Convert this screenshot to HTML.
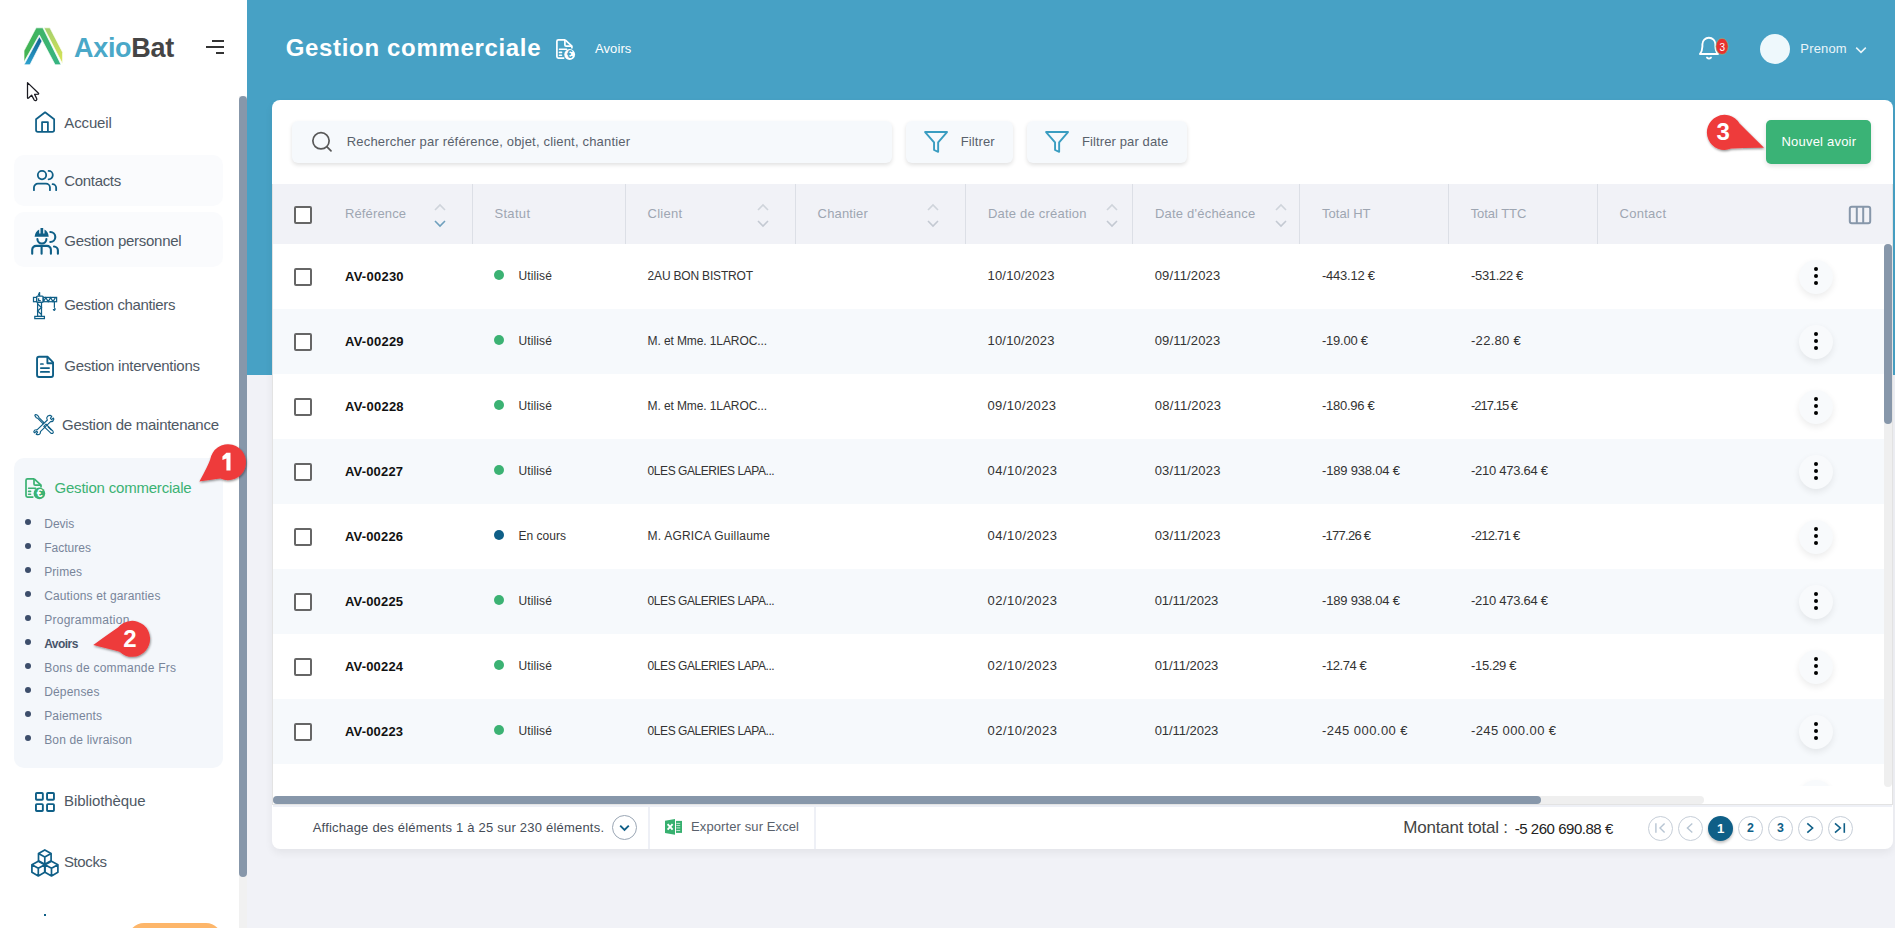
<!DOCTYPE html>
<html><head><meta charset="utf-8">
<style>
*{box-sizing:border-box;margin:0;padding:0}
html,body{width:1895px;height:928px;overflow:hidden;background:#f1f2f7;font-family:"Liberation Sans",sans-serif;position:relative}
.a{position:absolute;white-space:nowrap}
#side{position:absolute;left:0;top:0;width:247px;height:928px;background:#fff}
#hdr{position:absolute;left:247px;top:0;width:1648px;height:375px;background:#47a1c5}
#card{position:absolute;left:272px;top:100px;width:1621px;height:749px;background:#fff;border-radius:8px;box-shadow:0 4px 8px rgba(0,0,0,.06)}
.dot{position:absolute;width:6px;height:6px;border-radius:3px;background:#3d4e6b}
.cb{position:absolute;width:18px;height:18px;border:2px solid #666;border-radius:2px;background:#fff}
.kb{position:absolute;width:34px;height:34px;border-radius:17px;background:#f8fafc;box-shadow:0 3px 7px rgba(0,0,0,.08)}
.kb i{position:absolute;left:15px;width:4.2px;height:4.2px;border-radius:50%;background:#000}
.vs{position:absolute;top:184px;width:1px;height:60px;background:#dcdfe6}
</style></head><body>
<div id="side"><svg class="a" style="left:20px;top:24px" width="50" height="46" viewBox="0 0 50 46">
<defs><linearGradient id="lgA" x1="0" y1="0" x2="1" y2="0"><stop offset="0" stop-color="#45b450"/><stop offset="1" stop-color="#35b487"/></linearGradient>
<linearGradient id="lgB" x1="0" y1="0" x2="0" y2="1"><stop offset="0" stop-color="#0f5f8f"/><stop offset="1" stop-color="#2ea3cf"/></linearGradient>
<linearGradient id="lgY" x1="0" y1="0" x2="0" y2="1"><stop offset="0" stop-color="#a3cf6c"/><stop offset="1" stop-color="#dbe555"/></linearGradient></defs>
<g stroke="#fff" stroke-width="0.7" stroke-linejoin="miter">
<polygon points="16.1,3.8 22.9,3.8 41.1,40.8 35.1,40.8 19.3,10.9 4,38 4,26.8" fill="url(#lgA)"/>
<polygon points="19.3,12.6 22,17.1 10,40.8 4,40.8" fill="url(#lgB)"/>
<polygon points="23.9,3.8 29.9,3.8 42.6,28.2 42.6,40 " fill="url(#lgY)"/>
</g></svg><div class="a " style="left:74.00px;top:35.14px;font-size:27px;line-height:27px;color:#454545;font-weight:bold;letter-spacing:-0.300px;"><span style="color:#4aa8c8">Axio</span><span style="color:#454545">Bat</span></div>
<div class="a" style="left:212px;top:40px;width:12px;height:2px;background:#333"></div><div class="a" style="left:206px;top:46px;width:18px;height:2px;background:#333"></div><div class="a" style="left:216px;top:52px;width:8px;height:2px;background:#333"></div><svg class="a" style="left:20px;top:76px" width="30" height="30" viewBox="0 0 30 30"><path d="M7.5 6.6 V21.8 Q7.8 22.7 8.6 22 L11.6 19.1 L14.3 24.1 Q15.2 25 16.2 24.4 Q17.2 23.7 16.7 22.6 L14.6 18.4 L18.5 18.1 Q18.9 17.6 18.5 17.2 Z" fill="#fff" stroke="#1b1b22" stroke-width="1.25" stroke-linejoin="round"/></svg><div class="a" style="left:14px;top:155px;width:209px;height:51px;border-radius:10px;background:#fafbfd"></div><div class="a" style="left:14px;top:212px;width:209px;height:55px;border-radius:10px;background:#fafbfd"></div><div class="a" style="left:14px;top:458px;width:209px;height:310px;border-radius:10px;background:#f4f7fb"></div><div class="a " style="left:64.30px;top:114.80px;font-size:15px;line-height:15px;color:#4e5864;letter-spacing:-0.142px;">Accueil</div>
<div class="a " style="left:64.30px;top:172.80px;font-size:15px;line-height:15px;color:#4e5864;letter-spacing:-0.328px;">Contacts</div>
<div class="a " style="left:64.30px;top:233.30px;font-size:15px;line-height:15px;color:#4e5864;letter-spacing:-0.278px;">Gestion personnel</div>
<div class="a " style="left:64.30px;top:297.30px;font-size:15px;line-height:15px;color:#4e5864;letter-spacing:-0.345px;">Gestion chantiers</div>
<div class="a " style="left:64.30px;top:358.30px;font-size:15px;line-height:15px;color:#4e5864;letter-spacing:-0.260px;">Gestion interventions</div>
<div class="a " style="left:62.00px;top:417.30px;font-size:15px;line-height:15px;color:#4e5864;letter-spacing:-0.267px;">Gestion de maintenance</div>
<div class="a " style="left:64.00px;top:793.30px;font-size:15px;line-height:15px;color:#4e5864;letter-spacing:-0.088px;">Bibliothèque</div>
<div class="a " style="left:64.00px;top:854.10px;font-size:15px;line-height:15px;color:#4e5864;letter-spacing:-0.403px;">Stocks</div>
<div class="a " style="left:54.50px;top:480.30px;font-size:15px;line-height:15px;color:#3bb273;letter-spacing:-0.205px;">Gestion commerciale</div>
<div class="dot" style="left:25px;top:519px"></div><div class="a " style="left:44.20px;top:517.84px;font-size:12px;line-height:12px;color:#78859a;letter-spacing:0.024px;">Devis</div>
<div class="dot" style="left:25px;top:543px"></div><div class="a " style="left:44.20px;top:541.84px;font-size:12px;line-height:12px;color:#78859a;letter-spacing:0.017px;">Factures</div>
<div class="dot" style="left:25px;top:567px"></div><div class="a " style="left:44.20px;top:565.84px;font-size:12px;line-height:12px;color:#78859a;letter-spacing:0.092px;">Primes</div>
<div class="dot" style="left:25px;top:591px"></div><div class="a " style="left:44.20px;top:589.84px;font-size:12px;line-height:12px;color:#78859a;letter-spacing:0.140px;">Cautions et garanties</div>
<div class="dot" style="left:25px;top:615px"></div><div class="a " style="left:44.20px;top:613.84px;font-size:12px;line-height:12px;color:#78859a;letter-spacing:0.264px;">Programmation</div>
<div class="dot" style="left:25px;top:639px"></div><div class="a " style="left:44.20px;top:637.84px;font-size:12px;line-height:12px;color:#48546a;font-weight:bold;letter-spacing:-0.540px;">Avoirs</div>
<div class="dot" style="left:25px;top:663px"></div><div class="a " style="left:44.20px;top:661.84px;font-size:12px;line-height:12px;color:#78859a;letter-spacing:0.232px;">Bons de commande Frs</div>
<div class="dot" style="left:25px;top:687px"></div><div class="a " style="left:44.20px;top:685.84px;font-size:12px;line-height:12px;color:#78859a;letter-spacing:0.167px;">Dépenses</div>
<div class="dot" style="left:25px;top:711px"></div><div class="a " style="left:44.20px;top:709.84px;font-size:12px;line-height:12px;color:#78859a;letter-spacing:0.138px;">Paiements</div>
<div class="dot" style="left:25px;top:735px"></div><div class="a " style="left:44.20px;top:733.84px;font-size:12px;line-height:12px;color:#78859a;letter-spacing:0.161px;">Bon de livraison</div>
<svg class="a" style="left:28px;top:105px" width="35" height="35" viewBox="0 0 35 35"><path d="M8.05 14.2 L17.1 7.3 L26.15 14.2 V25 Q26.15 26.85 24.3 26.85 H9.9 Q8.05 26.85 8.05 25 Z M14.05 26.85 V17.05 H19.9 V26.85" fill="none" stroke="#0f5f87" stroke-width="1.75" stroke-linejoin="round"/></svg>
<svg class="a" style="left:28px;top:165px" width="35" height="35" viewBox="0 0 35 35"><g fill="none" stroke="#0f5f87" stroke-width="1.8" stroke-linecap="round"><circle cx="14" cy="10.1" r="4.2"/><path d="M20.6 5.9 A4.2 4.2 0 0 1 20.6 14.3"/><path d="M5.95 25.2 V22.6 A4 4 0 0 1 9.95 18.6 H17.95 A4 4 0 0 1 21.95 22.6 V25.2"/><path d="M24.6 19.2 A3.6 3.6 0 0 1 28.15 22.8 V25.2"/></g></svg>
<svg class="a" style="left:28px;top:222px" width="35" height="35" viewBox="0 0 35 35"><g fill="#0f5f87"><path d="M6.6 14.7 H20.7 Q20.5 9.6 16.5 7.4 V11.5 H15.2 V6 H12.5 V11.5 H11.2 V7.4 Q7 9.6 6.6 14.7 Z"/></g><g fill="none" stroke="#0f5f87" stroke-width="2.1" stroke-linecap="round"><path d="M9.4 17 A4.5 4.5 0 0 0 18.4 17"/><path d="M22.3 10 A5 5 0 0 1 22.3 20"/><path d="M4.2 31.8 V27.8 A3.9 3.9 0 0 1 8.1 23.9 H19 A3.9 3.9 0 0 1 22.9 27.8 V31.8"/><path d="M13.6 24 V31.8"/><path d="M26 24.5 A4 4 0 0 1 29.9 28.4 V31.8"/></g></svg>
<svg class="a" style="left:28px;top:288px" width="35" height="35" viewBox="0 0 35 35"><g fill="none" stroke="#0f5f87" stroke-width="1.25"><rect x="6.8" y="28.4" width="9.6" height="2.2"/><rect x="9.6" y="14.4" width="3.9" height="14"/><path d="M9.6 16 L13.5 19.5 L9.6 23 L13.5 26.5"/><rect x="8.6" y="8" width="6.6" height="6.3" rx="1"/><rect x="5.5" y="9.4" width="3.1" height="4.3"/><rect x="15.2" y="9.4" width="13.4" height="4.3"/><path d="M15.5 13.5 L17.8 9.6 L20.2 13.5 L22.6 9.6 L25 13.5 L27.4 9.6"/><path d="M11.6 8 L11.6 4.2 L10.2 7.6"/><path d="M26.4 13.7 V19.8"/><path d="M26.4 20 Q27.8 21.2 26.4 22.3 Q25.2 22 25.4 21"/><path d="M10.6 10.2 V12.6 H12.8"/></g></svg>
<svg class="a" style="left:28px;top:350px" width="35" height="35" viewBox="0 0 35 35"><g fill="none" stroke="#0f5f87" stroke-width="1.9" stroke-linejoin="round"><path d="M19.7 6.8 H11 Q9.05 6.8 9.05 8.75 V25 Q9.05 26.95 11 26.95 H23.1 Q25.05 26.95 25.05 25 V12.3 Z"/><path d="M19.4 6.8 V13.2 H25"/></g><g stroke="#0f5f87" stroke-width="1.7" stroke-linecap="round"><path d="M12.8 14 H15"/><path d="M12.8 18.1 H21.1"/><path d="M12.8 21.9 H21.1"/></g></svg>
<svg class="a" style="left:28px;top:408px" width="35" height="35" viewBox="0 0 35 35"><g fill="none" stroke="#0f5f87" stroke-width="1.15" stroke-linejoin="round"><path d="M7.2 8.2 Q6.4 7 7.6 6.6 Q9 6.4 10.2 8 L11 9.6 L16 14.6 L15 15.6 L10 10.6 L8.4 9.8 Z"/><path d="M16.4 17.8 L18 16.2 L25 23.2 Q25.8 24.6 24.6 25.4 Q23.4 25.8 22.6 24.8 L15.8 18.4 Z"/><path d="M19.8 18.6 L23.6 22.4"/><path d="M22.4 7.4 Q19.6 7 18.8 9.6 Q18.6 11 19.4 12 L9 21.8 Q6.4 21.4 5.8 23.6 Q6 24.4 6.6 24.8 L8.6 23.2 L9.6 24.2 L8.2 26.2 Q10.6 27.4 12 25.6 Q12.6 24.6 12.4 23.6 L22.6 13.6 Q25.2 14 25.8 11.4 Q25.8 10.6 25.4 10 L23.6 11.6 L22.4 10.4 L23.8 8.2 Z"/></g></svg>
<svg class="a" style="left:20px;top:472px" width="30" height="30" viewBox="0 0 30 30"><g fill="none" stroke="#3bb273" stroke-width="1.7" stroke-linejoin="round"><path d="M14.2 6.8 H7.5 Q6 6.8 6 8.3 V23.6 Q6 25.1 7.5 25.1 H13.4"/><path d="M14.2 6.8 L21 13.2 V15.6"/><path d="M14 6.8 V12 Q14 13.2 15.2 13.2 H21"/></g><g stroke="#3bb273" stroke-width="1.6" stroke-linecap="round"><path d="M8.6 16.2 H15.6"/><path d="M8.6 19.4 H10.6"/><path d="M8.6 22.3 H10.6"/></g><circle cx="19.4" cy="21.4" r="5.8" fill="#3bb273"/><text x="19.6" y="25.4" font-family="Liberation Sans" font-weight="bold" font-size="10.5" fill="#fff" text-anchor="middle">€</text></svg>
<svg class="a" style="left:28px;top:783px" width="35" height="35" viewBox="0 0 35 35"><g fill="none" stroke="#0f5f87" stroke-width="1.9"><rect x="7.95" y="9.95" width="6.9" height="6.8" rx="0.8"/><rect x="19.05" y="9.95" width="6.9" height="6.8" rx="0.8"/><rect x="7.95" y="21.15" width="6.9" height="6.8" rx="0.8"/><rect x="19.05" y="21.15" width="6.9" height="6.8" rx="0.8"/></g></svg>
<svg class="a" style="left:26px;top:845px" width="38" height="38" viewBox="0 0 38 38"><g fill="none" stroke="#0f5f87" stroke-width="1.7" stroke-linejoin="round"><path d="M18.8 4.9 L25.1 8.4 V15.7 L18.8 19.2 L12.5 15.7 V8.4 Z M12.5 8.4 L18.8 11.9 L25.1 8.4 M18.8 11.9 V19.2"/><path d="M12.3 16.2 L18.7 19.7 V27.3 L12.3 31 L5.9 27.3 V19.7 Z M5.9 19.7 L12.3 23.2 L18.7 19.7 M12.3 23.2 V31"/><path d="M25.5 16.2 L31.9 19.7 V27.3 L25.5 31 L19 27.3 V19.7 Z M19 19.7 L25.5 23.2 L31.9 19.7 M25.5 23.2 V31"/></g></svg>
<div class="a" style="left:239px;top:96px;width:8px;height:832px;background:#f1f1f1"></div><div class="a" style="left:239px;top:96px;width:8px;height:781px;border-radius:4px;background:#8797aa"></div><div class="a" style="left:44px;top:914px;width:2px;height:2px;background:#0f5f87"></div><div class="a" style="left:128px;top:923px;width:94px;height:40px;border-radius:16px;background:#fdb66a"></div></div><div id="hdr"></div><div class="a " style="left:285.70px;top:36.48px;font-size:24px;line-height:24px;color:#fff;font-weight:bold;letter-spacing:0.668px;">Gestion commerciale</div>
<div class="a " style="left:595.00px;top:42.30px;font-size:13px;line-height:13px;color:#fff;letter-spacing:0.083px;">Avoirs</div>
<div class="a " style="left:1800.30px;top:42.00px;font-size:13px;line-height:13px;color:#eaf5f9;letter-spacing:0.176px;">Prenom</div>
<div class="a" style="left:1760px;top:34px;width:30px;height:30px;border-radius:15px;background:#eef8fc"></div><svg class="a" style="left:550px;top:33px" width="30" height="30" viewBox="0 0 30 30"><g fill="none" stroke="#fff" stroke-width="1.7" stroke-linejoin="round"><path d="M15.1 6.8 H8.4 Q6.9 6.8 6.9 8.3 V23.6 Q6.9 25.1 8.4 25.1 H14.3"/><path d="M15.1 6.8 L21.9 13.2 V15.6"/><path d="M14.9 6.8 V12 Q14.9 13.2 16.1 13.2 H21.9"/></g><g stroke="#fff" stroke-width="1.6" stroke-linecap="round"><path d="M9.5 16.2 H16.5"/><path d="M9.5 19.4 H11.5"/><path d="M9.5 22.3 H11.5"/></g><circle cx="19.7" cy="21.5" r="5.4" fill="#fff"/><text x="19.9" y="25.3" font-family="Liberation Sans" font-weight="bold" font-size="10" fill="#47a1c5" text-anchor="middle">€</text></svg>
<svg class="a" style="left:1695px;top:30px" width="40" height="35" viewBox="0 0 40 35"><g fill="none" stroke="#fff" stroke-width="1.9" stroke-linejoin="round"><path d="M5 24 H23 Q20.6 21.5 20.4 16.5 V14.2 A6.5 6.5 0 0 0 7.4 14.2 V16.5 Q7.2 21.5 5 24 Z"/><path d="M12 27.6 Q14 29.6 16 27.6" stroke-linecap="round"/></g><ellipse cx="27.05" cy="16.4" rx="6.2" ry="8.1" fill="#e8322f" stroke="#6fd39a" stroke-width="0.6"/><text x="27.2" y="21.1" font-family="Liberation Sans" font-size="10" fill="#fff" text-anchor="middle">3</text></svg>
<svg class="a" style="left:1853px;top:44px" width="16" height="12" viewBox="0 0 16 12"><path d="M3.2 3.6 L8 8.4 L12.8 3.6" fill="none" stroke="#eaf5f9" stroke-width="1.5"/></svg>
<div id="card"></div><div class="a" style="left:292px;top:121px;width:600px;height:42px;border-radius:6px;background:#f6f9fc;box-shadow:0 2px 4px rgba(0,0,0,.12)"></div><div class="a " style="left:346.80px;top:135.00px;font-size:13px;line-height:13px;color:#59616c;letter-spacing:0.179px;">Rechercher par référence, objet, client, chantier</div>
<div class="a" style="left:906px;top:121px;width:107px;height:42px;border-radius:6px;background:#f6f9fc;box-shadow:0 2px 4px rgba(0,0,0,.12)"></div><div class="a " style="left:960.80px;top:135.30px;font-size:13px;line-height:13px;color:#59616c;letter-spacing:0.097px;">Filtrer</div>
<div class="a" style="left:1027px;top:121px;width:160px;height:42px;border-radius:6px;background:#f6f9fc;box-shadow:0 2px 4px rgba(0,0,0,.12)"></div><div class="a " style="left:1082.00px;top:135.30px;font-size:13px;line-height:13px;color:#59616c;letter-spacing:0.111px;">Filtrer par date</div>
<div class="a" style="left:1766px;top:120px;width:105px;height:44px;border-radius:5px;background:#3ab376;box-shadow:0 2px 5px rgba(0,0,0,.12)"></div><div class="a " style="left:1781.50px;top:134.60px;font-size:13px;line-height:13px;color:#fff;letter-spacing:0.204px;">Nouvel avoir</div>
<div class="a" style="left:272px;top:184px;width:1621px;height:621px;border:1px solid #e3e3e3;border-top:none"></div><div class="a" style="left:273px;top:184px;width:1619px;height:60px;background:#f1f2f7"></div><div class="vs" style="left:472px"></div><div class="vs" style="left:625px"></div><div class="vs" style="left:795px"></div><div class="vs" style="left:965px"></div><div class="vs" style="left:1132px"></div><div class="vs" style="left:1299px"></div><div class="vs" style="left:1448px"></div><div class="vs" style="left:1597px"></div><div class="cb" style="left:294px;top:206px"></div><div class="a " style="left:345.00px;top:207.20px;font-size:13px;line-height:13px;color:#9ea6b2;letter-spacing:0.128px;">Référence</div>
<div class="a " style="left:494.40px;top:207.20px;font-size:13px;line-height:13px;color:#9ea6b2;letter-spacing:0.327px;">Statut</div>
<div class="a " style="left:647.60px;top:207.20px;font-size:13px;line-height:13px;color:#9ea6b2;letter-spacing:0.233px;">Client</div>
<div class="a " style="left:817.60px;top:207.20px;font-size:13px;line-height:13px;color:#9ea6b2;letter-spacing:0.152px;">Chantier</div>
<div class="a " style="left:988.00px;top:207.20px;font-size:13px;line-height:13px;color:#9ea6b2;letter-spacing:0.207px;">Date de création</div>
<div class="a " style="left:1154.90px;top:207.20px;font-size:13px;line-height:13px;color:#9ea6b2;letter-spacing:0.224px;">Date d'échéance</div>
<div class="a " style="left:1322.00px;top:207.20px;font-size:13px;line-height:13px;color:#9ea6b2;letter-spacing:0.014px;">Total HT</div>
<div class="a " style="left:1470.70px;top:207.20px;font-size:13px;line-height:13px;color:#9ea6b2;letter-spacing:-0.063px;">Total TTC</div>
<div class="a " style="left:1619.60px;top:207.20px;font-size:13px;line-height:13px;color:#9ea6b2;letter-spacing:0.266px;">Contact</div>
<svg class="a" style="left:433px;top:201px" width="14" height="28" viewBox="0 0 14 28"><path d="M2 9 L7 4 L12 9" fill="none" stroke="#cfd4db" stroke-width="1.6"/><path d="M2 20 L7 25 L12 20" fill="none" stroke="#6fa0bd" stroke-width="1.6"/></svg><svg class="a" style="left:756px;top:201px" width="14" height="28" viewBox="0 0 14 28"><path d="M2 9 L7 4 L12 9" fill="none" stroke="#cfd4db" stroke-width="1.6"/><path d="M2 20 L7 25 L12 20" fill="none" stroke="#c3c9d2" stroke-width="1.6"/></svg><svg class="a" style="left:926px;top:201px" width="14" height="28" viewBox="0 0 14 28"><path d="M2 9 L7 4 L12 9" fill="none" stroke="#cfd4db" stroke-width="1.6"/><path d="M2 20 L7 25 L12 20" fill="none" stroke="#c3c9d2" stroke-width="1.6"/></svg><svg class="a" style="left:1104.5px;top:201px" width="14" height="28" viewBox="0 0 14 28"><path d="M2 9 L7 4 L12 9" fill="none" stroke="#cfd4db" stroke-width="1.6"/><path d="M2 20 L7 25 L12 20" fill="none" stroke="#c3c9d2" stroke-width="1.6"/></svg><svg class="a" style="left:1273.5px;top:201px" width="14" height="28" viewBox="0 0 14 28"><path d="M2 9 L7 4 L12 9" fill="none" stroke="#cfd4db" stroke-width="1.6"/><path d="M2 20 L7 25 L12 20" fill="none" stroke="#c3c9d2" stroke-width="1.6"/></svg><svg class="a" style="left:1848px;top:205px" width="24" height="20" viewBox="0 0 24 20"><rect x="1.8" y="1.8" width="20.4" height="16.4" rx="2" fill="none" stroke="#8797aa" stroke-width="2"/><line x1="8.8" y1="2" x2="8.8" y2="18" stroke="#8797aa" stroke-width="2"/><line x1="15.2" y1="2" x2="15.2" y2="18" stroke="#8797aa" stroke-width="2"/></svg><div class="a" style="left:273px;top:244px;width:1611px;height:542px;overflow:hidden"><div class="a" style="left:0;top:0px;width:1611px;height:65px;background:#fff"></div><div class="cb" style="left:21px;top:24px"></div><div class="a " style="left:72.00px;top:26.00px;font-size:13px;line-height:13px;color:#111;font-weight:bold;letter-spacing:0.249px;">AV-00230</div>
<div class="a" style="left:221px;top:26px;width:10px;height:10px;border-radius:5px;background:#3bb273"></div><div class="a " style="left:245.50px;top:25.84px;font-size:12px;line-height:12px;color:#333;letter-spacing:0.105px;">Utilisé</div>
<div class="a " style="left:374.60px;top:25.84px;font-size:12px;line-height:12px;color:#333;letter-spacing:-0.187px;">2AU BON BISTROT</div>
<div class="a " style="left:714.50px;top:25.00px;font-size:13px;line-height:13px;color:#333;letter-spacing:0.204px;">10/10/2023</div>
<div class="a " style="left:881.70px;top:25.00px;font-size:13px;line-height:13px;color:#333;letter-spacing:0.156px;">09/11/2023</div>
<div class="a " style="left:1049.00px;top:25.00px;font-size:13px;line-height:13px;color:#333;letter-spacing:-0.242px;">-443.12 €</div>
<div class="a " style="left:1198.00px;top:25.00px;font-size:13px;line-height:13px;color:#333;letter-spacing:-0.329px;">-531.22 €</div>
<div class="kb" style="left:1526px;top:15.5px"><i style="top:7.8px"></i><i style="top:14.8px"></i><i style="top:21.8px"></i></div><div class="a" style="left:0;top:65px;width:1611px;height:65px;background:#f6f9fc"></div><div class="cb" style="left:21px;top:89px"></div><div class="a " style="left:72.00px;top:91.00px;font-size:13px;line-height:13px;color:#111;font-weight:bold;letter-spacing:0.249px;">AV-00229</div>
<div class="a" style="left:221px;top:91px;width:10px;height:10px;border-radius:5px;background:#3bb273"></div><div class="a " style="left:245.50px;top:90.84px;font-size:12px;line-height:12px;color:#333;letter-spacing:0.105px;">Utilisé</div>
<div class="a " style="left:374.60px;top:90.84px;font-size:12px;line-height:12px;color:#333;letter-spacing:-0.103px;">M. et Mme. 1LAROC...</div>
<div class="a " style="left:714.50px;top:90.00px;font-size:13px;line-height:13px;color:#333;letter-spacing:0.204px;">10/10/2023</div>
<div class="a " style="left:881.70px;top:90.00px;font-size:13px;line-height:13px;color:#333;letter-spacing:0.156px;">09/11/2023</div>
<div class="a " style="left:1049.00px;top:90.00px;font-size:13px;line-height:13px;color:#333;letter-spacing:-0.243px;">-19.00 €</div>
<div class="a " style="left:1198.00px;top:90.00px;font-size:13px;line-height:13px;color:#333;letter-spacing:0.285px;">-22.80 €</div>
<div class="kb" style="left:1526px;top:80.5px"><i style="top:7.8px"></i><i style="top:14.8px"></i><i style="top:21.8px"></i></div><div class="a" style="left:0;top:130px;width:1611px;height:65px;background:#fff"></div><div class="cb" style="left:21px;top:154px"></div><div class="a " style="left:72.00px;top:156.00px;font-size:13px;line-height:13px;color:#111;font-weight:bold;letter-spacing:0.249px;">AV-00228</div>
<div class="a" style="left:221px;top:156px;width:10px;height:10px;border-radius:5px;background:#3bb273"></div><div class="a " style="left:245.50px;top:155.84px;font-size:12px;line-height:12px;color:#333;letter-spacing:0.105px;">Utilisé</div>
<div class="a " style="left:374.60px;top:155.84px;font-size:12px;line-height:12px;color:#333;letter-spacing:-0.103px;">M. et Mme. 1LAROC...</div>
<div class="a " style="left:714.50px;top:155.00px;font-size:13px;line-height:13px;color:#333;letter-spacing:0.382px;">09/10/2023</div>
<div class="a " style="left:881.70px;top:155.00px;font-size:13px;line-height:13px;color:#333;letter-spacing:0.245px;">08/11/2023</div>
<div class="a " style="left:1049.00px;top:155.00px;font-size:13px;line-height:13px;color:#333;letter-spacing:-0.267px;">-180.96 €</div>
<div class="a " style="left:1198.00px;top:155.00px;font-size:13px;line-height:13px;color:#333;letter-spacing:-0.992px;">-217.15 €</div>
<div class="kb" style="left:1526px;top:145.5px"><i style="top:7.8px"></i><i style="top:14.8px"></i><i style="top:21.8px"></i></div><div class="a" style="left:0;top:195px;width:1611px;height:65px;background:#f6f9fc"></div><div class="cb" style="left:21px;top:219px"></div><div class="a " style="left:72.00px;top:221.00px;font-size:13px;line-height:13px;color:#111;font-weight:bold;letter-spacing:0.164px;">AV-00227</div>
<div class="a" style="left:221px;top:221px;width:10px;height:10px;border-radius:5px;background:#3bb273"></div><div class="a " style="left:245.50px;top:220.84px;font-size:12px;line-height:12px;color:#333;letter-spacing:0.105px;">Utilisé</div>
<div class="a " style="left:374.60px;top:220.84px;font-size:12px;line-height:12px;color:#333;letter-spacing:-0.438px;">0LES GALERIES LAPA...</div>
<div class="a " style="left:714.50px;top:220.00px;font-size:13px;line-height:13px;color:#333;letter-spacing:0.493px;">04/10/2023</div>
<div class="a " style="left:881.70px;top:220.00px;font-size:13px;line-height:13px;color:#333;letter-spacing:0.178px;">03/11/2023</div>
<div class="a " style="left:1049.00px;top:220.00px;font-size:13px;line-height:13px;color:#333;letter-spacing:-0.186px;">-189 938.04 €</div>
<div class="a " style="left:1198.00px;top:220.00px;font-size:13px;line-height:13px;color:#333;letter-spacing:-0.270px;">-210 473.64 €</div>
<div class="kb" style="left:1526px;top:210.5px"><i style="top:7.8px"></i><i style="top:14.8px"></i><i style="top:21.8px"></i></div><div class="a" style="left:0;top:260px;width:1611px;height:65px;background:#fff"></div><div class="cb" style="left:21px;top:284px"></div><div class="a " style="left:72.00px;top:286.00px;font-size:13px;line-height:13px;color:#111;font-weight:bold;letter-spacing:0.164px;">AV-00226</div>
<div class="a" style="left:221px;top:286px;width:10px;height:10px;border-radius:5px;background:#0f5f87"></div><div class="a " style="left:245.50px;top:285.84px;font-size:12px;line-height:12px;color:#333;letter-spacing:0.021px;">En cours</div>
<div class="a " style="left:374.60px;top:285.84px;font-size:12px;line-height:12px;color:#333;letter-spacing:0.205px;">M. AGRICA Guillaume</div>
<div class="a " style="left:714.50px;top:285.00px;font-size:13px;line-height:13px;color:#333;letter-spacing:0.493px;">04/10/2023</div>
<div class="a " style="left:881.70px;top:285.00px;font-size:13px;line-height:13px;color:#333;letter-spacing:0.178px;">03/11/2023</div>
<div class="a " style="left:1049.00px;top:285.00px;font-size:13px;line-height:13px;color:#333;letter-spacing:-0.742px;">-177.26 €</div>
<div class="a " style="left:1198.00px;top:285.00px;font-size:13px;line-height:13px;color:#333;letter-spacing:-0.704px;">-212.71 €</div>
<div class="kb" style="left:1526px;top:275.5px"><i style="top:7.8px"></i><i style="top:14.8px"></i><i style="top:21.8px"></i></div><div class="a" style="left:0;top:325px;width:1611px;height:65px;background:#f6f9fc"></div><div class="cb" style="left:21px;top:349px"></div><div class="a " style="left:72.00px;top:351.00px;font-size:13px;line-height:13px;color:#111;font-weight:bold;letter-spacing:0.164px;">AV-00225</div>
<div class="a" style="left:221px;top:351px;width:10px;height:10px;border-radius:5px;background:#3bb273"></div><div class="a " style="left:245.50px;top:350.84px;font-size:12px;line-height:12px;color:#333;letter-spacing:0.105px;">Utilisé</div>
<div class="a " style="left:374.60px;top:350.84px;font-size:12px;line-height:12px;color:#333;letter-spacing:-0.438px;">0LES GALERIES LAPA...</div>
<div class="a " style="left:714.50px;top:350.00px;font-size:13px;line-height:13px;color:#333;letter-spacing:0.493px;">02/10/2023</div>
<div class="a " style="left:881.70px;top:350.00px;font-size:13px;line-height:13px;color:#333;letter-spacing:-0.055px;">01/11/2023</div>
<div class="a " style="left:1049.00px;top:350.00px;font-size:13px;line-height:13px;color:#333;letter-spacing:-0.186px;">-189 938.04 €</div>
<div class="a " style="left:1198.00px;top:350.00px;font-size:13px;line-height:13px;color:#333;letter-spacing:-0.270px;">-210 473.64 €</div>
<div class="kb" style="left:1526px;top:340.5px"><i style="top:7.8px"></i><i style="top:14.8px"></i><i style="top:21.8px"></i></div><div class="a" style="left:0;top:390px;width:1611px;height:65px;background:#fff"></div><div class="cb" style="left:21px;top:414px"></div><div class="a " style="left:72.00px;top:416.00px;font-size:13px;line-height:13px;color:#111;font-weight:bold;letter-spacing:0.164px;">AV-00224</div>
<div class="a" style="left:221px;top:416px;width:10px;height:10px;border-radius:5px;background:#3bb273"></div><div class="a " style="left:245.50px;top:415.84px;font-size:12px;line-height:12px;color:#333;letter-spacing:0.105px;">Utilisé</div>
<div class="a " style="left:374.60px;top:415.84px;font-size:12px;line-height:12px;color:#333;letter-spacing:-0.438px;">0LES GALERIES LAPA...</div>
<div class="a " style="left:714.50px;top:415.00px;font-size:13px;line-height:13px;color:#333;letter-spacing:0.493px;">02/10/2023</div>
<div class="a " style="left:881.70px;top:415.00px;font-size:13px;line-height:13px;color:#333;letter-spacing:-0.055px;">01/11/2023</div>
<div class="a " style="left:1049.00px;top:415.00px;font-size:13px;line-height:13px;color:#333;letter-spacing:-0.415px;">-12.74 €</div>
<div class="a " style="left:1198.00px;top:415.00px;font-size:13px;line-height:13px;color:#333;letter-spacing:-0.315px;">-15.29 €</div>
<div class="kb" style="left:1526px;top:405.5px"><i style="top:7.8px"></i><i style="top:14.8px"></i><i style="top:21.8px"></i></div><div class="a" style="left:0;top:455px;width:1611px;height:65px;background:#f6f9fc"></div><div class="cb" style="left:21px;top:479px"></div><div class="a " style="left:72.00px;top:481.00px;font-size:13px;line-height:13px;color:#111;font-weight:bold;letter-spacing:0.164px;">AV-00223</div>
<div class="a" style="left:221px;top:481px;width:10px;height:10px;border-radius:5px;background:#3bb273"></div><div class="a " style="left:245.50px;top:480.84px;font-size:12px;line-height:12px;color:#333;letter-spacing:0.105px;">Utilisé</div>
<div class="a " style="left:374.60px;top:480.84px;font-size:12px;line-height:12px;color:#333;letter-spacing:-0.438px;">0LES GALERIES LAPA...</div>
<div class="a " style="left:714.50px;top:480.00px;font-size:13px;line-height:13px;color:#333;letter-spacing:0.493px;">02/10/2023</div>
<div class="a " style="left:881.70px;top:480.00px;font-size:13px;line-height:13px;color:#333;letter-spacing:-0.055px;">01/11/2023</div>
<div class="a " style="left:1049.00px;top:480.00px;font-size:13px;line-height:13px;color:#333;letter-spacing:0.439px;">-245 000.00 €</div>
<div class="a " style="left:1198.00px;top:480.00px;font-size:13px;line-height:13px;color:#333;letter-spacing:0.397px;">-245 000.00 €</div>
<div class="kb" style="left:1526px;top:470.5px"><i style="top:7.8px"></i><i style="top:14.8px"></i><i style="top:21.8px"></i></div><div class="a" style="left:0;top:520px;width:1611px;height:65px;background:#fff"></div><div class="kb" style="left:1526px;top:535.5px"></div></div><div class="a" style="left:1884px;top:244px;width:8px;height:543px;border-radius:4px;background:#efefef"></div><div class="a" style="left:1884px;top:244px;width:8px;height:180px;border-radius:4px;background:#8797aa"></div><div class="a" style="left:273px;top:796px;width:1431px;height:8px;border-radius:4px;background:#efefef"></div><div class="a" style="left:273px;top:796px;width:1268px;height:8px;border-radius:4px;background:#8797aa"></div><div class="a" style="left:273px;top:805px;width:1619px;height:2px;background:#eef0f6"></div><div class="a" style="left:648px;top:806px;width:2px;height:43px;background:#eef0f6"></div><div class="a" style="left:814px;top:806px;width:2px;height:43px;background:#eef0f6"></div><div class="a " style="left:312.70px;top:820.70px;font-size:13px;line-height:13px;color:#454c57;letter-spacing:0.211px;">Affichage des éléments 1 à 25 sur 230 éléments.</div>
<div class="a" style="left:612px;top:815px;width:25px;height:25px;border-radius:13px;border:1px solid #9aa6b4;background:#fff"></div><div class="a " style="left:691.00px;top:820.30px;font-size:13px;line-height:13px;color:#59616c;letter-spacing:0.106px;">Exporter sur Excel</div>
<div class="a " style="left:1403.30px;top:819.01px;font-size:17px;line-height:17px;color:#444;letter-spacing:-0.216px;">Montant total :</div>
<div class="a " style="left:1514.70px;top:820.70px;font-size:15px;line-height:15px;color:#222;letter-spacing:-0.463px;">-5 260 690.88 €</div>
<div class="a" style="left:1647.5px;top:815.5px;width:25px;height:25px;border-radius:13px;border:1px solid #c6ced8;background:#fff"></div><div class="a" style="left:1677.5px;top:815.5px;width:25px;height:25px;border-radius:13px;border:1px solid #c6ced8;background:#fff"></div><div class="a" style="left:1708.1px;top:815.5px;width:25px;height:25px;border-radius:13px;background:#0f5f87;box-shadow:0 2px 3px rgba(0,0,0,.25)"></div><div class="a" style="left:1738.1px;top:815.5px;width:25px;height:25px;border-radius:13px;border:1px solid #c6ced8;background:#fff"></div><div class="a" style="left:1768.0px;top:815.5px;width:25px;height:25px;border-radius:13px;border:1px solid #c6ced8;background:#fff"></div><div class="a" style="left:1797.5px;top:815.5px;width:25px;height:25px;border-radius:13px;border:1px solid #c6ced8;background:#fff"></div><div class="a" style="left:1827.9px;top:815.5px;width:25px;height:25px;border-radius:13px;border:1px solid #c6ced8;background:#fff"></div><svg class="a" style="left:305px;top:125px" width="35" height="35" viewBox="0 0 35 35"><g fill="none" stroke="#585858" stroke-width="1.7" stroke-linecap="round"><circle cx="16" cy="15.8" r="8.15"/><path d="M22 21.8 L26 25.8"/></g></svg>
<svg class="a" style="left:920px;top:125px" width="35" height="35" viewBox="0 0 35 35"><path d="M5.1 7.05 H27 L18.15 17.4 V26.8 L14.05 25 V17.4 Z" fill="none" stroke="#3a9dc1" stroke-width="1.9" stroke-linejoin="round"/></svg>
<svg class="a" style="left:1041px;top:125px" width="35" height="35" viewBox="0 0 35 35"><path d="M5.1 7.05 H27 L18.15 17.4 V26.8 L14.05 25 V17.4 Z" fill="none" stroke="#3a9dc1" stroke-width="1.9" stroke-linejoin="round"/></svg>
<svg class="a" style="left:660px;top:812px" width="30" height="30" viewBox="0 0 30 30"><path d="M5 8.7 L15 7 V22.8 L5 21 Z" fill="#37b06f"/><rect x="16" y="8.9" width="6" height="12" fill="#37b06f"/><g stroke="#dff3e7" stroke-width="0.8"><path d="M16.4 11.4 H20.2"/><path d="M16.4 13.5 H20.2"/><path d="M16.4 15.9 H20.2"/><path d="M16.4 18.5 H20.2"/></g><path d="M7.6 12.2 L12.6 17.6 M12.6 12.2 L7.6 17.6" stroke="#fff" stroke-width="1.9"/></svg>
<svg class="a" style="left:612px;top:815px" width="25" height="25" viewBox="0 0 25 25"><path d="M8.2 10.6 L12.5 14.9 L16.8 10.6" fill="none" stroke="#0f5f87" stroke-width="1.9"/></svg>
<svg class="a" style="left:1645px;top:812px" width="220" height="32" viewBox="0 0 220 32"><g fill="none" stroke="#b7c5d3" stroke-width="1.4"><path d="M10.9 11.2 V20.7"/><path d="M19.6 11.4 L15 15.9 L19.6 20.4"/><path d="M47.3 11.4 L42.4 15.9 L47.3 20.4"/></g><g fill="none" stroke="#0f5f87" stroke-width="1.6"><path d="M162.3 11.4 L167.6 16 L162.3 20.6"/><path d="M190 11.4 L195.3 16 L190 20.6"/><path d="M199.3 11.2 V20.8"/></g><text x="75.8" y="20.9" font-family="Liberation Sans" font-weight="bold" font-size="13.3" fill="#fff" text-anchor="middle">1</text><text x="105.5" y="19.9" font-family="Liberation Sans" font-weight="bold" font-size="12.4" fill="#0f5f87" text-anchor="middle">2</text><text x="135.5" y="19.9" font-family="Liberation Sans" font-weight="bold" font-size="12.4" fill="#0f5f87" text-anchor="middle">3</text></svg>
<svg class="a" style="left:0;top:0;overflow:visible" width="1895" height="928" viewBox="0 0 1895 928"><defs><filter id="sh" x="-30%" y="-30%" width="160%" height="160%"><feDropShadow dx="0.6" dy="1.2" stdDeviation="0.9" flood-color="#000" flood-opacity="0.45"/></filter></defs>
<g fill="#ee3a3b" filter="url(#sh)">
<path d="M1739.5 123.5 Q1745 129 1764 147.7 Q1745 147.5 1731 148.6 A17.5 17.5 0 1 1 1739.5 123.5 Z"/>
<path d="M210.2 459.6 Q208 466 199.4 481.6 Q213 479.5 220.5 478.6 A18 18 0 1 0 210.2 459.6 Z"/>
<path d="M118 627.6 Q110 633 93.3 645 Q110 649 119.6 651.8 A18 18 0 1 0 118 627.6 Z"/>
</g>
<g font-family="Liberation Sans" font-weight="bold" font-size="24" fill="#fff">
<text x="1716.4" y="140.4">3</text><text x="123.3" y="646.5">2</text></g><g fill="#fff"><polygon points="226.4,452.8 230.5,452.8 230.5,470.6 226.4,470.6 226.4,458.6 222.4,460 222.4,456.4"/>
</g></svg>

</body></html>
